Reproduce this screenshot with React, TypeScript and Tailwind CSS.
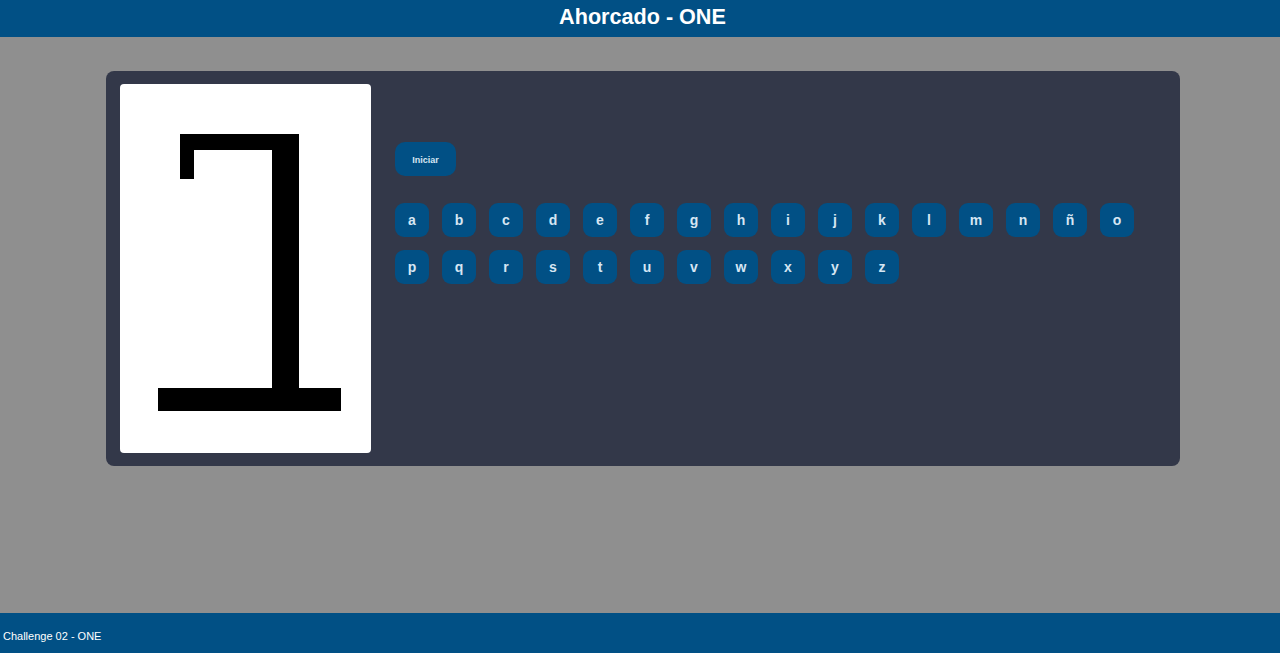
const row1 = ["a", "b", "c", "d", "e", "f", "g", "h", "i", "j", "k", "l", "m", "n", "ñ", "o"];
const row2 = ["p", "q", "r", "s", "t", "u", "v", "w", "x", "y", "z"];

function Gallows() {
  return (
    <svg width="251" height="369" viewBox="0 0 251 369" className="block">
      <rect x="38" y="304" width="183" height="23" fill="#000" />
      <rect x="152" y="50" width="27" height="256" fill="#000" />
      <rect x="60" y="50" width="119" height="16" fill="#000" />
      <rect x="60" y="50" width="14" height="45" fill="#000" />
    </svg>
  );
}

export default function App() {
  const letters = [...row1, ...row2];

  return (
    <div className="min-h-screen flex flex-col bg-[#8f8f8f] font-['Liberation_Sans',Arial,sans-serif]">
      <header className="h-[37px] bg-[#015085] flex items-start justify-center pt-[6px] pl-[5px]">
        <h1 className="text-[21.6px] font-bold text-white leading-none">Ahorcado - ONE</h1>
      </header>

      <main className="flex-1 pt-[34px]">
        <div className="ml-[106px] w-[1074px] h-[395px] bg-[#333849] rounded-lg flex pl-[14px] pt-[13px]">
          <div className="w-[251px] h-[369px] bg-white rounded-sm overflow-hidden">
            <Gallows />
          </div>

          <div className="ml-[24px] pt-[58px] flex-1 pr-[14px]">
            <button className="w-[61px] h-[34px] rounded-[10px] bg-[#015085] text-[#d6e6f3] text-[9px] font-bold flex items-center justify-center pt-[3px]">
              Iniciar
            </button>

            <div className="mt-[27px] flex flex-wrap gap-[13px] w-[750px]">
              {letters.map((l) => (
                <button
                  key={l}
                  className="w-[34px] h-[34px] rounded-[9px] bg-[#015085] text-[#d6e6f3] text-[14px] font-bold flex items-center justify-center"
                >
                  {l}
                </button>
              ))}
            </div>
          </div>
        </div>
      </main>

      <footer className="h-[40px] bg-[#015085] flex items-center pl-[3px] pt-[6px]">
        <p className="text-[11px] text-white">Challenge 02 - ONE</p>
      </footer>
    </div>
  );
}
